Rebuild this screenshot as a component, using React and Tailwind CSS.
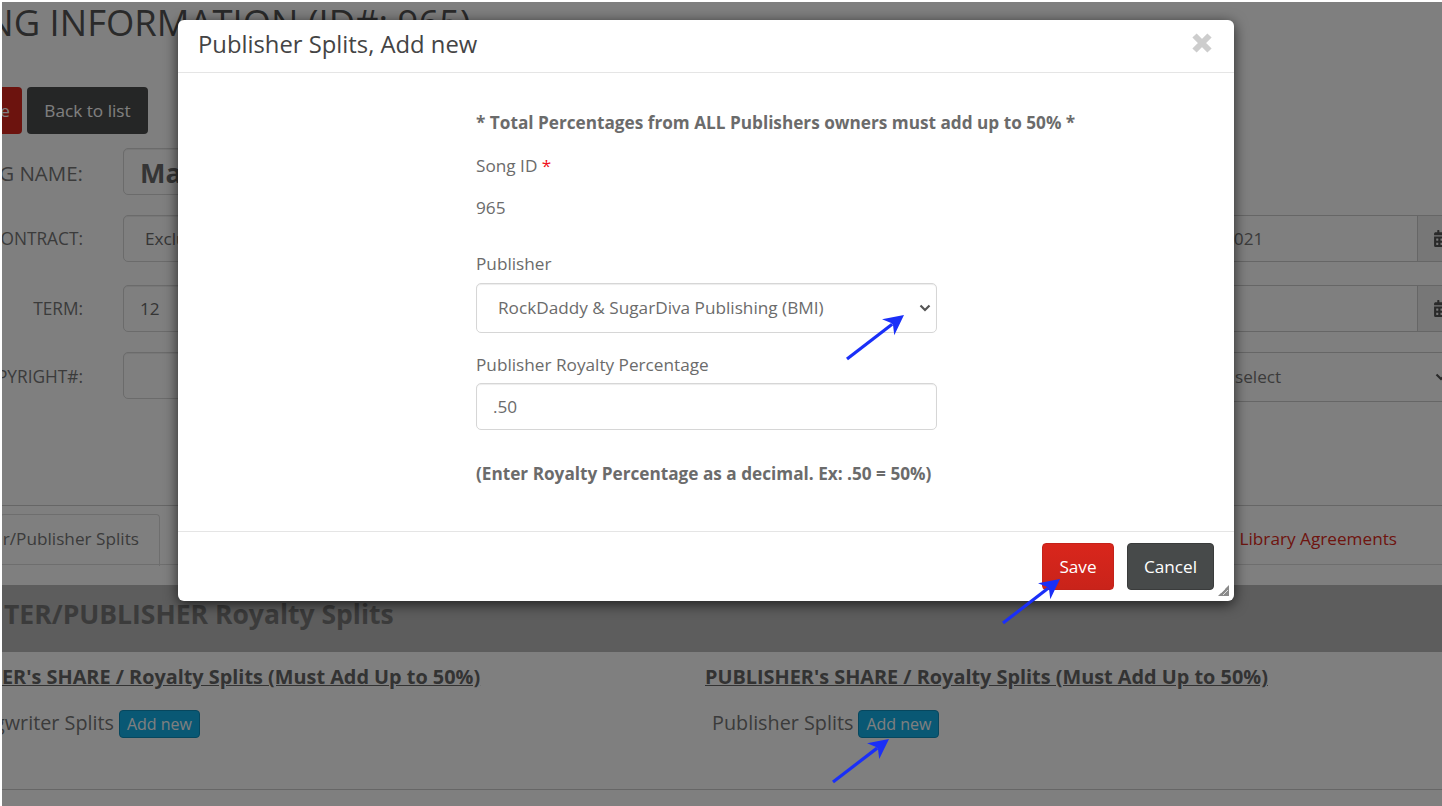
import { FaCalendarAlt } from 'react-icons/fa'

const field = 'h-[47px] border border-[#d6d6d6] rounded-[5px] bg-white flex items-center text-[#6b6b6b] shrink-0 shadow-[inset_0_1px_1px_rgba(0,0,0,0.075)]'

// blue annotation arrows drawn on top of the screenshot
function Arrow({ x1, y1, x2, y2 }) {
  const len = Math.hypot(x2 - x1, y2 - y1)
  const ux = (x2 - x1) / len
  const uy = (y2 - y1) / len
  const nx = -uy
  const ny = ux
  const bx = x2 - ux * 20
  const by = y2 - uy * 20
  const nbx = x2 - ux * 15
  const nby = y2 - uy * 15
  const head = [
    [x2, y2],
    [bx + nx * 10, by + ny * 10],
    [nbx + nx * 1.5, nby + ny * 1.5],
    [nbx - nx * 1.5, nby - ny * 1.5],
    [bx - nx * 10, by - ny * 10],
  ].map(p => p.join(',')).join(' ')
  return (
    <g>
      <line x1={x1} y1={y1} x2={nbx} y2={nby} stroke="#1a2ff8" strokeWidth="3.2" />
      <polygon points={head} fill="#1a2ff8" />
    </g>
  )
}

function Chevron({ className }) {
  return (
    <svg className={className} width="12" height="8" viewBox="0 0 12 8" fill="none">
      <path d="M1.5 1.5L6 6L10.5 1.5" stroke="#555" strokeWidth="2.2" />
    </svg>
  )
}

function FormRow({ label, mt, children, right, labelClass = 'text-[17.3px]' }) {
  return (
    <div className={`flex items-start ${mt}`}>
      <div className={`w-[121px] h-[47px] pr-[40px] flex items-center justify-end text-[#777] whitespace-nowrap shrink-0 ${labelClass}`}>{label}</div>
      <div className="w-[300px] shrink-0">{children}</div>
      <div className="ml-[762px] w-[259px] shrink-0">{right}</div>
    </div>
  )
}

function DateField({ value }) {
  return (
    <div className="flex h-[47px] w-[259px] overflow-hidden border border-[#ccc] bg-white text-[17.2px] text-[#777]">
      <div className="w-[231px] shrink-0 flex items-center pl-[38px]">{value}</div>
      <div className="flex-1 bg-[#eee] border-l border-[#ccc] flex items-center pl-[15px] text-[#555]">
        <FaCalendarAlt size={17} className="shrink-0" />
      </div>
    </div>
  )
}

function AddNew() {
  return <span className="h-[28px] w-[81px] rounded-[4px] bg-[#12b0e8] border border-[#0e8fbd] text-white text-[16px] flex items-center justify-center pt-[1px]">Add new</span>
}

function Background() {
  return (
    <div className="absolute inset-0 mt-[2px] ml-[2px] overflow-hidden bg-white font-['Open_Sans',sans-serif]">
      <div className="w-[1440px] flex flex-col">
        {/* title + buttons */}
        <h1 className="ml-[-64px] mt-[-5px] h-[50px] text-[36.4px] leading-[50px] text-[#555] whitespace-nowrap">SONG INFORMATION (ID#: 965)</h1>
        <div className="flex gap-[5px] ml-[-50px] mt-[40px]">
          <div className="h-[47px] w-[70px] rounded-[4px] bg-[#d9261c] text-white text-[17.2px] flex items-center justify-end pr-[12px]">Save</div>
          <div className="h-[47px] w-[121px] rounded-[4px] bg-[#4a4c4c] text-white text-[17.2px] flex items-center justify-center">Back to list</div>
        </div>

        {/* song form */}
        <div className="mt-[14px]">
          <FormRow label="SONG NAME:" mt="mt-0" labelClass="text-[20.5px] pt-[3px]">
            <div className={`${field} text-[27px] font-bold pl-[16px] pt-[4px]`}>Ma</div>
          </FormRow>
          <FormRow label="CONTRACT:" mt="mt-[20px]" right={<DateField value="2021" />}>
            <div className={`${field} text-[17.2px] pl-[21px]`}>Exclusive</div>
          </FormRow>
          <FormRow label="TERM:" mt="mt-[23px]" right={<DateField value="" />}>
            <div className={`${field} text-[17.2px] pl-[16px]`}>12</div>
          </FormRow>
          <FormRow
            label="COPYRIGHT#:"
            mt="mt-[20px]"
            labelClass="text-[17.3px] pt-[3px]"
            right={
              <div className="h-[50px] border border-[#ccc] bg-white flex items-center justify-between text-[17.2px] text-[#777] pl-[49px]">
                <span>select</span>
                <Chevron className="mr-[-4px]" />
              </div>
            }
          >
            <div className={field} />
          </FormRow>
        </div>

        {/* tabs */}
        <div className="mt-[103px] border-t border-[#ccc] h-[59px] flex items-start">
          <div className="mt-[8px] h-[52px] w-[160px] bg-white border border-[#ddd] border-b-0 ml-[-2px] rounded-t-[4px] text-[17.2px] text-[#777] flex items-center justify-end pr-[20px] pb-[4px] whitespace-nowrap">r/Publisher Splits</div>
        </div>
        <div className="h-[1px] bg-[#ddd]" />
        <div className="relative h-[20px]">
          <span className="absolute right-[45px] top-[-39px] text-[17.2px] text-[#dd2a20] whitespace-nowrap">Library Agreements</span>
        </div>

        {/* royalty band */}
        <div className="h-[67px] bg-[#bababa] flex items-center pl-[2px] pb-[8px] text-[26.5px] font-bold text-[#777] whitespace-nowrap">TER/PUBLISHER Royalty Splits</div>

        <div className="grid grid-cols-[703px_1fr] pt-[12px]">
          <div>
            <h4 className="text-[19.85px] font-bold leading-[26px] text-[#666] underline whitespace-nowrap">ER's SHARE / Royalty Splits (Must Add Up to 50%)</h4>
            <div className="mt-[18px] ml-[-8px] flex items-center gap-[5px] text-[19.8px] text-[#777] whitespace-nowrap">
              <span className="mb-[2px]">gwriter Splits</span>
              <AddNew />
            </div>
          </div>
          <div>
            <h4 className="text-[19.85px] font-bold leading-[26px] text-[#666] underline whitespace-nowrap">PUBLISHER's SHARE / Royalty Splits (Must Add Up to 50%)</h4>
            <div className="mt-[18px] ml-[7px] flex items-center gap-[5px] text-[19.8px] text-[#777] whitespace-nowrap">
              <span className="mb-[2px]">Publisher Splits</span>
              <AddNew />
            </div>
          </div>
        </div>
        <div className="mt-[49px] border-t border-[#ccc]" />
      </div>
      <div className="absolute inset-0 bg-black/50" />
    </div>
  )
}

function Modal() {
  return (
    <div className="absolute left-[178px] top-[20px] w-[1056px] h-[581px] bg-white rounded-[6px] shadow-[0_3px_14px_rgba(0,0,0,0.7)] flex flex-col font-['Open_Sans',sans-serif]">
      <div className="h-[53px] border-b border-[#e5e5e5] flex items-center justify-between pl-[20px] pr-[22px] shrink-0">
        <span className="text-[23.8px] leading-[50px] text-[#444] mb-[4px]">Publisher Splits, Add new</span>
        <svg width="20" height="20" viewBox="0 0 20 20" fill="none" className="mb-[6px]">
          <path d="M2.5 2.5L17.5 17.5M17.5 2.5L2.5 17.5" stroke="#cdcdcd" strokeWidth="6" />
        </svg>
      </div>

      <div className="flex-1 ml-[298px] w-[461px] text-[17.2px] text-[#6b6b6b] flex flex-col">
        <p className="mt-[38px] font-bold whitespace-nowrap leading-[24px]">* Total Percentages from ALL Publishers owners must add up to 50% *</p>
        <p className="mt-[19px] leading-[24px]">Song ID <span className="text-[#f01020]">*</span></p>
        <p className="mt-[18px] leading-[24px]">965</p>
        <p className="mt-[32px] leading-[24px]">Publisher</p>
        <div className={`${field} mt-[7px] h-[50px] w-[461px] pl-[21px] pr-[5px] justify-between`}>
          <span>RockDaddy &amp; SugarDiva Publishing (BMI)</span>
          <Chevron />
        </div>
        <p className="mt-[20px] leading-[24px]">Publisher Royalty Percentage</p>
        <div className={`${field} mt-[6px] w-[461px] pl-[16px]`}>.50</div>
        <p className="mt-[32px] font-bold whitespace-nowrap leading-[24px]">(Enter Royalty Percentage as a decimal. Ex: .50 = 50%)</p>
      </div>

      <div className="relative h-[70px] border-t border-[#e5e5e5] shrink-0 flex justify-end gap-[13px] pt-[11px] pr-[20px]">
        <div className="h-[47px] w-[72px] rounded-[4px] bg-gradient-to-b from-[#d9261c] to-[#c9231a] border border-[#c4221a] text-white text-[17.2px] flex items-center justify-center">Save</div>
        <div className="h-[47px] w-[87px] rounded-[4px] bg-[#474a4a] border border-[#3a3c3c] text-white text-[17.2px] flex items-center justify-center">Cancel</div>
        <svg className="absolute right-[5px] bottom-[5px]" width="11" height="11" viewBox="0 0 11 11">
          <path d="M11 0V11H0Z" fill="#8a8a8a" />
          <path d="M7 4L3 8M10 5L5 10" stroke="#fff" strokeWidth="0.7" />
        </svg>
      </div>
    </div>
  )
}

export default function App() {
  return (
    <div className="relative w-[1442px] h-[806px] overflow-hidden bg-white">
      <Background />
      <Modal />
      <svg className="absolute inset-0 pointer-events-none" width="1442" height="806">
        <Arrow x1={847} y1={359} x2={904} y2={315} />
        <Arrow x1={1003} y1={623} x2={1060} y2={579} />
        <Arrow x1={833} y1={782} x2={889} y2={739} />
      </svg>
    </div>
  )
}
